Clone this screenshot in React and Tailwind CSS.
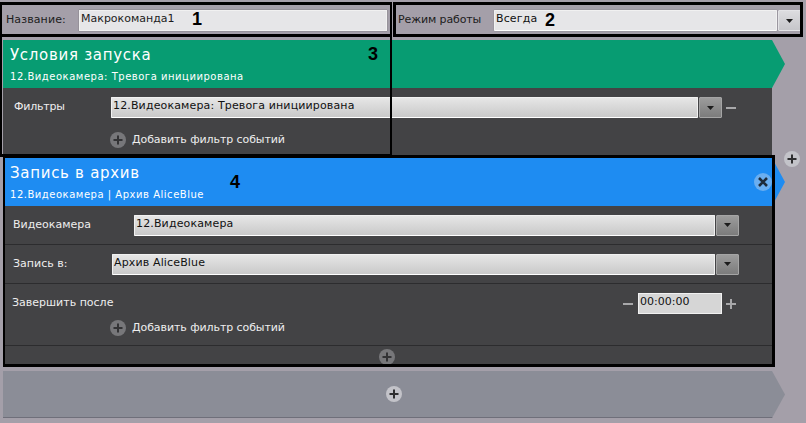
const FONT = "font-['DejaVu_Sans',sans-serif]";

function PlusCircle({ className = "", light = false }) {
  return (
    <svg viewBox="0 0 16 16" className={`w-4 h-4 shrink-0 ${className}`}>
      <circle cx="8" cy="8" r="8" fill={light ? "#c3c3c9" : "#77777a"} />
      <path d="M8 3.5v9M3.5 8h9" stroke={light ? "#2e2e30" : "#333335"} strokeWidth="2" />
    </svg>
  );
}

function Caret() {
  return (
    <svg viewBox="0 0 7 4" className="w-[7px] h-1">
      <path d="M0 0h7L3.5 4z" fill="#1c1c1c" />
    </svg>
  );
}

function Combo({ value, width, dark = false, light = false }) {
  return (
    <div className="flex h-[21px]" style={{ width }}>
      <div
        className={`flex-1 min-w-0 pl-[1px] text-[11px] leading-[16px] tracking-[0.14px] text-[#111] border border-[#f1f1f1] border-b-white rounded-[1px] shadow-[0_0_1px_#555] ${
          light ? "bg-[#e6e6e8]" : "bg-linear-to-b from-[#e6e6e6] to-[#c9c9c9]"
        }`}
      >
        {value}
      </div>
      <div
        className={`w-[23px] ml-[1px] flex items-center justify-center rounded-[1px] border ${
          dark
            ? "bg-linear-to-b from-[#9c9c9c] to-[#7c7c7c] border-[#a5a5a5]"
            : "bg-linear-to-b from-[#dcdcdf] to-[#c6c6ca] border-[#e3e3e6]"
        }`}
      >
        <Caret />
      </div>
    </div>
  );
}

function Header({ title, sub, color }) {
  return (
    <div
      className="h-12 w-[782px] pl-[7px] pt-[6px] text-white [clip-path:polygon(0_0,769px_0,782px_50%,769px_100%,0_100%)]"
      style={{ backgroundColor: color }}
    >
      <div className="text-[15px] leading-[18px] tracking-[0.7px]">{title}</div>
      <div className="mt-[6px] text-[10px] leading-[13px] tracking-[0.52px]">{sub}</div>
    </div>
  );
}

function AddFilter({ className = "" }) {
  return (
    <div className={`flex items-center gap-[6px] pl-[107px] text-[11px] leading-4 tracking-[-0.08px] text-[#eee] ${className}`}>
      <PlusCircle />
      <span>Добавить фильтр событий</span>
    </div>
  );
}

function Frame({ className }) {
  return <div className={`absolute border-black pointer-events-none ${className}`} />;
}

function Mark({ children, className }) {
  return (
    <span className={`absolute font-['Liberation_Sans',sans-serif] font-bold text-[18px] leading-5 text-black ${className}`}>
      {children}
    </span>
  );
}

export default function App() {
  return (
    <div className={`relative w-[806px] h-[423px] overflow-hidden bg-[#a49fa9] ${FONT}`}>
      {/* top row */}
      <div className="flex items-center h-[21px] mt-[10px] text-[11px] text-[#1c1c1c]">
        <span className="w-[79px] pl-[6px] tracking-[0.1px]">Название:</span>
        <div className="w-[308px] h-[21px] pl-[1px] leading-[16px] border border-[#f1f1f1] bg-[#e6e6e8] shadow-[0_0_1px_#555]">
          Макрокоманда1
        </div>
        <span className="w-[96px] ml-[11px] tracking-[-0.12px]">Режим работы</span>
        <Combo value="Всегда" width={307} light />
      </div>

      {/* start conditions */}
      <div className="ml-[3px] mt-[9px]">
        <Header title="Условия запуска" sub="12.Видеокамера: Тревога инициирована" color="#079c72" />
        <div className="w-[769px] h-[70px] pt-[9px] bg-[#434345] text-[11px] text-[#eee]">
          <div className="flex items-center h-[21px]">
            <span className="w-[108px] pl-[11px] tracking-[-0.2px]">Фильтры</span>
            <Combo value="12.Видеокамера: Тревога инициирована" width={611} dark />
            <div className="w-[10px] h-[2px] ml-[4px] bg-[#a8a8aa]" />
          </div>
          <AddFilter className="mt-[14px]" />
        </div>
      </div>

      {/* archive action */}
      <div className="ml-[3px]">
        <Header title="Запись в архив" sub="12.Видеокамера | Архив AliceBlue" color="#1e8cf2" />
        <div className="w-[769px] h-[161px] bg-[#434345] text-[11px] text-[#eee]">
          <div className="flex items-center h-[39px] border-b border-[#2c2c2e]">
            <span className="w-[131px] pl-[10px]">Видеокамера</span>
            <Combo value="12.Видеокамера" width={605} dark />
          </div>
          <div className="flex items-center h-[39px] border-b border-[#2c2c2e]">
            <span className="w-[109px] pl-[10px]">Запись в:</span>
            <Combo value="Архив AliceBlue" width={627} dark />
          </div>
          <div className="h-[62px] pt-[9px] border-b border-[#2c2c2e]">
            <div className="flex items-center h-[21px]">
              <span className="w-[620px] pl-[9px]">Завершить после</span>
              <div className="w-[10px] h-[2px] bg-[#a8a8aa]" />
              <div className="w-[84px] h-[21px] ml-[5px] pl-[1px] leading-[16px] text-[#111] border border-[#f1f1f1] bg-[#d6d6d6]">
                00:00:00
              </div>
              <svg viewBox="0 0 10 10" className="w-[10px] h-[10px] ml-[4px]">
                <path d="M5 0v10M0 5h10" stroke="#a8a8aa" strokeWidth="2" />
              </svg>
            </div>
            <AddFilter className="mt-[6px]" />
          </div>
          <div className="flex justify-center pt-[3px] pr-[2px]">
            <PlusCircle />
          </div>
        </div>
      </div>

      {/* empty action slot */}
      <div className="ml-[3px] mt-[4px] h-[47px] w-[782px] flex items-center justify-center border-b border-[#6f6f7a] bg-[#8b8d97] [clip-path:polygon(0_0,769px_0,782px_50%,769px_100%,0_100%)]">
        <PlusCircle light />
      </div>

      {/* add-action button on the right edge */}
      <PlusCircle light className="absolute left-[784px] top-[151px]" />

      {/* close on the blue header */}
      <svg viewBox="0 0 18 18" className="absolute left-[754px] top-[173px] w-[18px] h-[18px]">
        <circle cx="9" cy="9" r="9" fill="#6aaef0" />
        <path d="M5 5l8 8M13 5l-8 8" stroke="#1e2b3a" strokeWidth="2.6" />
      </svg>

      {/* documentation frames and numbers */}
      <Frame className="left-0 top-[2px] w-[392px] h-[35px] border-[3px] border-l-2 border-r-2" />
      <Frame className="left-[393px] top-[2px] w-[410px] h-[35px] border-[3px]" />
      <Frame className="left-0 top-[35px] w-[392px] h-[122px] border-r-[2px] border-l-[2px] border-b-[3px]" />
      <Frame className="left-[3px] top-[155px] w-[772px] h-[212px] border-[3px] border-l-2" />
      <Mark className="left-[192px] top-[9px]">1</Mark>
      <Mark className="left-[545px] top-[10px]">2</Mark>
      <Mark className="left-[368px] top-[44px]">3</Mark>
      <Mark className="left-[230px] top-[172px]">4</Mark>
    </div>
  );
}
